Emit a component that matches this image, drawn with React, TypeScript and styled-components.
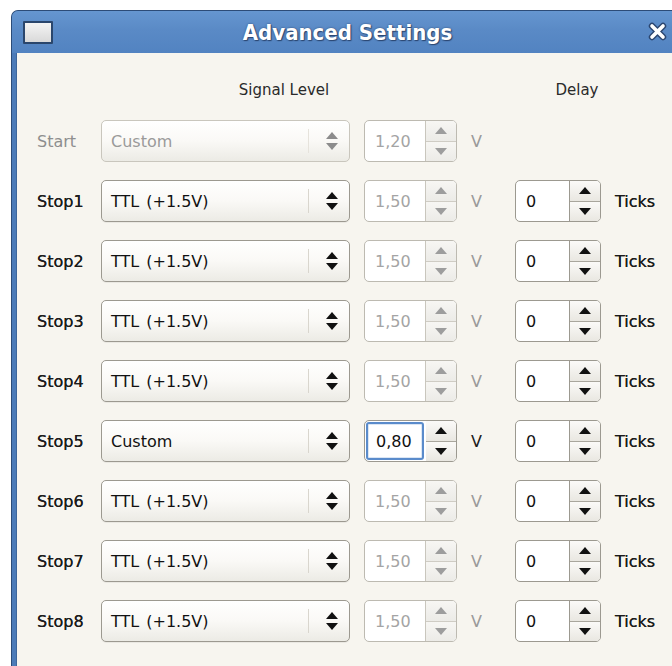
import React from "react";
import styled, { createGlobalStyle, css } from "styled-components";

const GlobalStyle = createGlobalStyle`
  html, body {
    margin: 0;
    padding: 0;
    background: #ffffff;
    overflow: hidden;
  }
  body {
    font-family: "DejaVu Sans", "Liberation Sans", sans-serif;
  }
`;

const Page = styled.div`
  padding: 10px 0 0 11px;
  width: 672px;
  height: 666px;
  box-sizing: border-box;
  overflow: hidden;
`;

const Window = styled.div`
  width: 700px;
  height: 700px;
  display: flex;
  flex-direction: column;
  background: #4c7bb8;
  border: 1px solid #2c4c78;
  border-right: none;
  border-bottom: none;
  border-radius: 7px 0 0 0;
  box-sizing: border-box;
`;

const TitleBar = styled.div`
  height: 42px;
  display: flex;
  align-items: center;
  position: relative;
  background: linear-gradient(#6596d0, #5a8ac6 45%, #5283c1);
  border-radius: 6px 0 0 0;
  box-sizing: border-box;
  padding: 0 0 0 11px;
`;

const MenuIcon = styled.div`
  width: 26px;
  height: 19px;
  border: 2px solid #2a466c;
  border-radius: 1px;
  background: linear-gradient(#f4f4f4, #d9d9d9);
`;

const Title = styled.div`
  position: absolute;
  left: 0;
  right: 28px;
  top: 0;
  bottom: 0;
  display: flex;
  align-items: center;
  justify-content: center;
  font-family: "DejaVu Sans Condensed", "DejaVu Sans", sans-serif;
  font-weight: bold;
  font-size: 22px;
  color: #ffffff;
  text-shadow: 0 0 2px #2b4670, 1px 1px 1px #2b4670;
  pointer-events: none;
`;

const CloseButton = styled.div`
  position: absolute;
  left: 636px;
  top: 11px;
  width: 19px;
  height: 19px;
`;

const Body = styled.div`
  flex: 1;
  margin-left: 4px;
  background: #f7f5ef;
  border-left: 1px solid #3e669b;
  padding: 25px 0 0 20px;
`;

const Grid = styled.div`
  display: grid;
  grid-template-columns: 50px 249px 93px 30px 86px auto;
  grid-auto-rows: 42px;
  grid-template-rows: 24px;
  column-gap: 14px;
  row-gap: 18px;
  align-items: center;
  font-size: 16px;
  color: #1c1c1c;
`;

const Header = styled.div<{ $col: string; $shift: number }>`
  grid-column: ${(p) => p.$col};
  text-align: center;
  padding-left: ${(p) => p.$shift}px;
  font-size: 15px;
  color: #2a2a2a;
`;

const Filler = styled.div`
  grid-column: 6;
`;

const RowLabel = styled.div<{ $dim?: boolean }>`
  color: ${(p) => (p.$dim ? "#8e8e8e" : "#1c1c1c")};
  white-space: nowrap;
  text-shadow: ${(p) => (p.$dim ? "none" : "0 0 0.3px #1c1c1c")};
`;

const Unit = styled.div<{ $dim?: boolean }>`
  color: ${(p) => (p.$dim ? "#9a9a9a" : "#1c1c1c")};
`;

const Combo = styled.div<{ $dim?: boolean }>`
  height: 42px;
  box-sizing: border-box;
  display: flex;
  align-items: center;
  border: 1px solid ${(p) => (p.$dim ? "#c9c6bd" : "#9c9990")};
  border-radius: 5px;
  background: linear-gradient(#ffffff, #faf9f6 50%, #ecebe5);
  padding-left: 9px;
  color: ${(p) => (p.$dim ? "#9a9a9a" : "#111111")};
  box-shadow: ${(p) => (p.$dim ? "none" : "0 1px 0 rgba(0,0,0,0.05)")};
`;

const ComboText = styled.span`
  flex: 1;
  white-space: pre;
  word-spacing: 2px;
`;

const ComboSep = styled.div<{ $dim?: boolean }>`
  width: 1px;
  align-self: stretch;
  margin: 8px 0;
  background: ${(p) => (p.$dim ? "#e6e3dc" : "#d9d6ce")};
`;

const ComboArrows = styled.div`
  width: 40px;
  padding-left: 6px;
  box-sizing: border-box;
  display: flex;
  justify-content: center;
`;

const Spin = styled.div<{ $dim?: boolean }>`
  height: 42px;
  box-sizing: border-box;
  display: flex;
  border: 1px solid ${(p) => (p.$dim ? "#bdbab1" : "#9c9990")};
  border-radius: 5px;
  background: #ffffff;
  overflow: hidden;
`;

const SpinEntry = styled.div<{ $dim?: boolean; $focus?: boolean }>`
  flex: 1;
  display: flex;
  align-items: center;
  padding-left: 10px;
  color: ${(p) => (p.$dim ? "#a4a4a4" : "#111111")};
  border-right: 1px solid ${(p) => (p.$dim ? "#c9c6bd" : "#9c9990")};
  ${(p) =>
    p.$focus &&
    css`
      margin: 1px 2px 1px 1px;
      border: 2px solid #5a8bcb;
      border-radius: 3px;
      padding-left: 8px;
      box-shadow: inset 0 0 0 1px #dbe6f4;
    `}
`;

const SpinButtons = styled.div`
  width: 30px;
  display: flex;
  flex-direction: column;
`;

const SpinButton = styled.div<{ $dim?: boolean; $down?: boolean }>`
  flex: 1;
  display: flex;
  align-items: center;
  justify-content: center;
  background: ${(p) =>
    p.$dim
      ? "linear-gradient(#f7f6f3, #ecebe7)"
      : "linear-gradient(#fbfaf8, #e9e7e1)"};
  border-top: ${(p) =>
    p.$down ? `1px solid ${p.$dim ? "#cfccc4" : "#a9a69d"}` : "none"};
`;

type TriProps = { dir: "up" | "down"; color: string; w?: number; h?: number };

const Tri: React.FC<TriProps> = ({ dir, color, w = 12, h = 7 }) => (
  <svg width={w} height={h} viewBox={`0 0 ${w} ${h}`}>
    {dir === "up" ? (
      <polygon points={`0,${h} ${w / 2},0 ${w},${h}`} fill={color} />
    ) : (
      <polygon points={`0,0 ${w},0 ${w / 2},${h}`} fill={color} />
    )}
  </svg>
);

const UpDown: React.FC<{ color: string }> = ({ color }) => (
  <svg width="14" height="20" viewBox="0 0 14 20">
    <polygon points="1,8 7,1 13,8" fill={color} />
    <polygon points="1,12 13,12 7,19" fill={color} />
  </svg>
);

type SpinBoxProps = { value: string; dim?: boolean; focus?: boolean };

const SpinBox: React.FC<SpinBoxProps> = ({ value, dim, focus }) => {
  const arrow = dim ? "#9d9d9d" : "#111111";
  return (
    <Spin $dim={dim}>
      <SpinEntry $dim={dim} $focus={focus}>
        {value}
      </SpinEntry>
      <SpinButtons>
        <SpinButton $dim={dim}>
          <Tri dir="up" color={arrow} />
        </SpinButton>
        <SpinButton $dim={dim} $down>
          <Tri dir="down" color={arrow} />
        </SpinButton>
      </SpinButtons>
    </Spin>
  );
};

type Row = {
  label: string;
  mode: string;
  volts: string;
  enabled: boolean;
  custom: boolean;
  delay?: string;
};

const rows: Row[] = [
  { label: "Start", mode: "Custom", volts: "1,20", enabled: false, custom: false },
  ...[1, 2, 3, 4, 5, 6, 7, 8].map((n) => ({
    label: `Stop${n}`,
    mode: n === 5 ? "Custom" : "TTL (+1.5V)",
    volts: n === 5 ? "0,80" : "1,50",
    enabled: true,
    custom: n === 5,
    delay: "0",
  })),
];

export default function App() {
  return (
    <>
      <GlobalStyle />
      <Page>
        <Window>
          <TitleBar>
            <MenuIcon />
            <Title>Advanced Settings</Title>
            <CloseButton>
              <svg width="19" height="19" viewBox="0 0 19 19">
                <path
                  d="M4 4 L15 15 M15 4 L4 15"
                  stroke="#2b4670"
                  strokeWidth="6.4"
                  strokeLinecap="round"
                />
                <path
                  d="M4 4 L15 15 M15 4 L4 15"
                  stroke="#ffffff"
                  strokeWidth="3.6"
                  strokeLinecap="round"
                />
              </svg>
            </CloseButton>
          </TitleBar>
          <Body>
            <Grid>
              <Header $col="2 / 4" $shift={10}>
                Signal Level
              </Header>
              <Header $col="5 / 6" $shift={38}>
                Delay
              </Header>
              <Filler />
              {rows.map((r) => (
                <React.Fragment key={r.label}>
                  <RowLabel $dim={!r.enabled}>{r.label}</RowLabel>
                  <Combo $dim={!r.enabled}>
                    <ComboText>{r.mode}</ComboText>
                    <ComboSep $dim={!r.enabled} />
                    <ComboArrows>
                      <UpDown color={r.enabled ? "#111111" : "#8c8c8c"} />
                    </ComboArrows>
                  </Combo>
                  <SpinBox value={r.volts} dim={!r.custom} focus={r.custom} />
                  <Unit $dim={!r.custom}>V</Unit>
                  {r.delay !== undefined ? (
                    <>
                      <SpinBox value={r.delay} />
                      <RowLabel>Ticks</RowLabel>
                    </>
                  ) : (
                    <>
                      <div />
                      <div />
                    </>
                  )}
                </React.Fragment>
              ))}
            </Grid>
          </Body>
        </Window>
      </Page>
    </>
  );
}
